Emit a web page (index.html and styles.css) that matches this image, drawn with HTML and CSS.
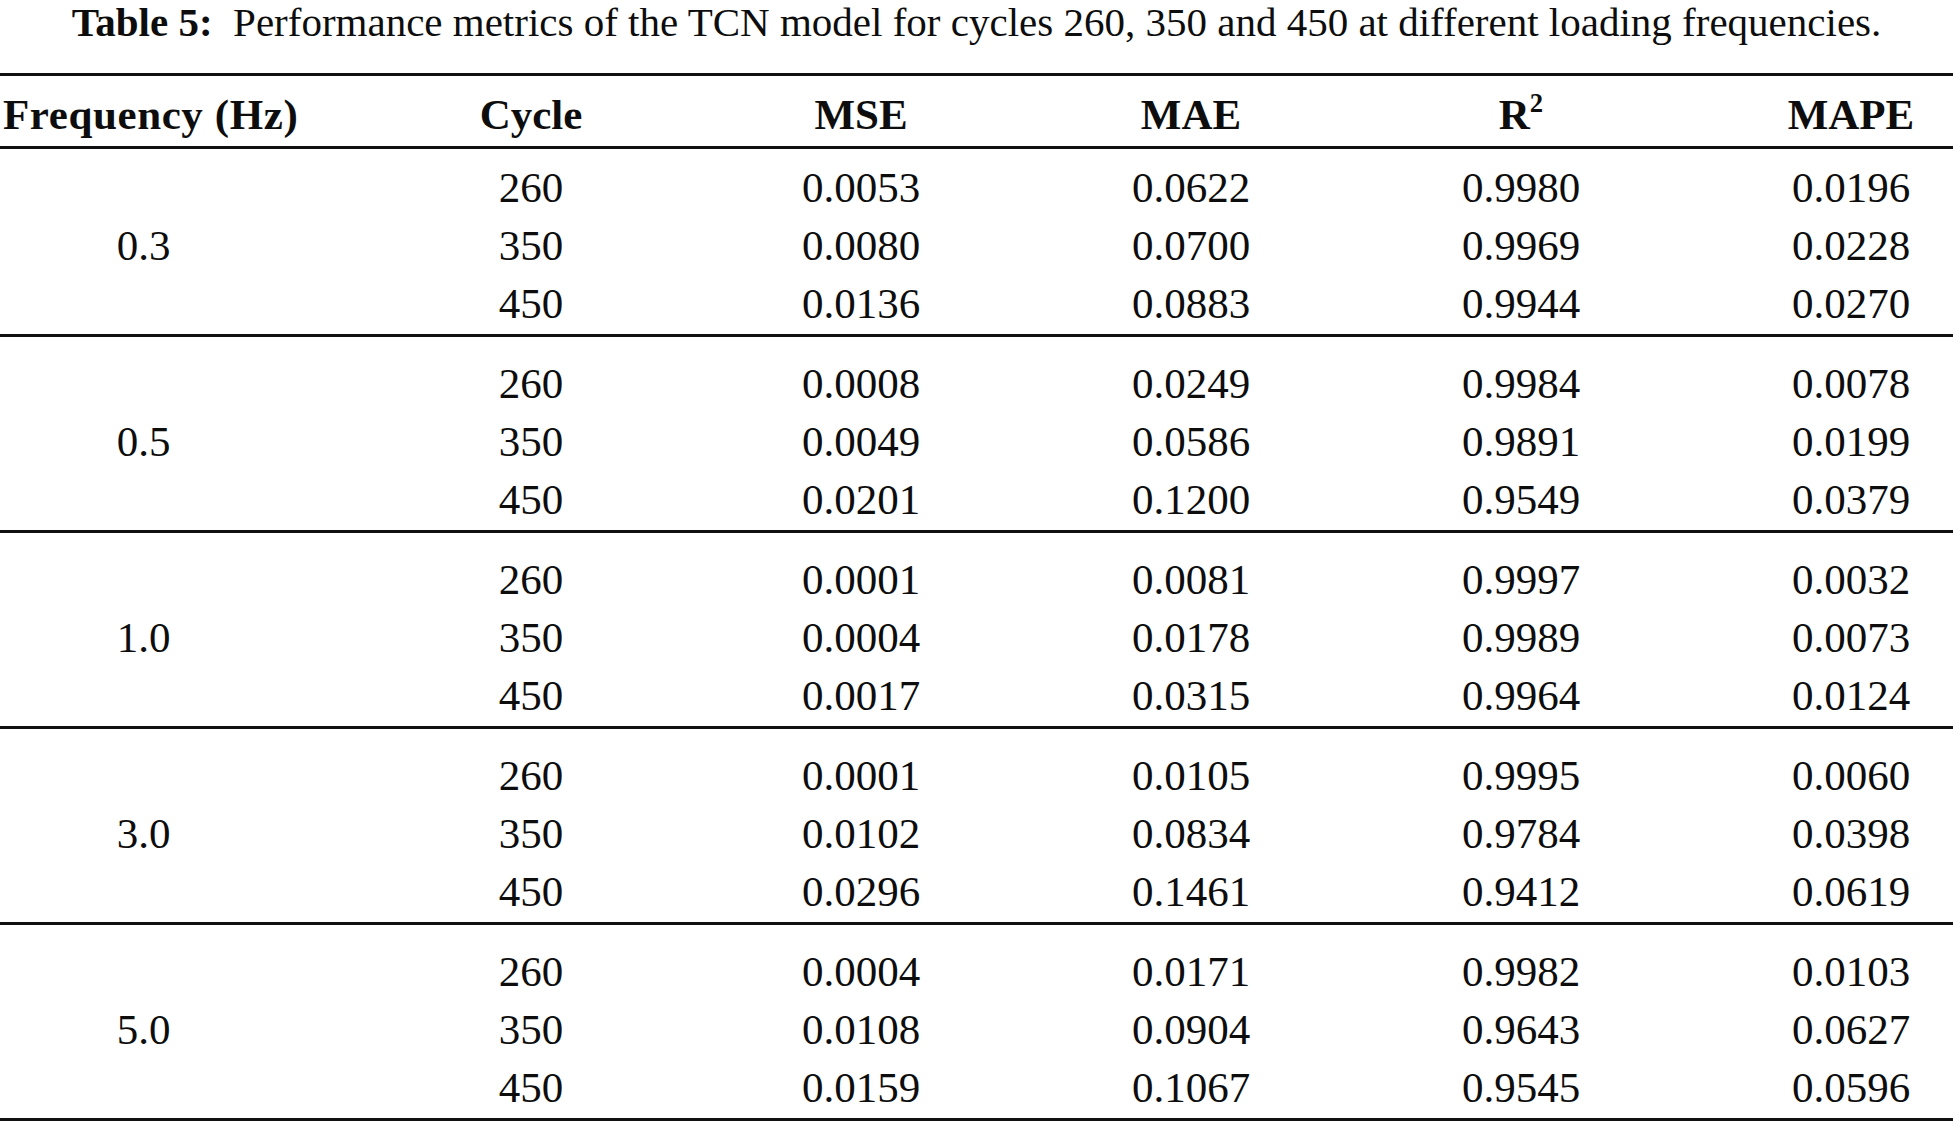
FILE: index.html
```html
<!DOCTYPE html>
<html lang="en">
<head>
<meta charset="utf-8">
<title>Table 5</title>
<link rel="stylesheet" href="styles.css">
</head>
<body>
<div class="page">
  <p class="caption"><b>Table 5:</b>&ensp;Performance metrics of the TCN model for cycles 260, 350 and 450 at different loading frequencies.</p>
  <div class="table">
    <div class="row head">
      <div class="cell first">Frequency (Hz)</div>
      <div class="cell">Cycle</div>
      <div class="cell">MSE</div>
      <div class="cell">MAE</div>
      <div class="cell">R<sup>2</sup></div>
      <div class="cell">MAPE</div>
    </div>

    <div class="row group top">
      <div class="cell freq">0.3</div>
      <div class="cell">260</div><div class="cell">0.0053</div><div class="cell">0.0622</div><div class="cell">0.9980</div><div class="cell">0.0196</div>
      <div class="cell">350</div><div class="cell">0.0080</div><div class="cell">0.0700</div><div class="cell">0.9969</div><div class="cell">0.0228</div>
      <div class="cell">450</div><div class="cell">0.0136</div><div class="cell">0.0883</div><div class="cell">0.9944</div><div class="cell">0.0270</div>
    </div>

    <div class="row group">
      <div class="cell freq">0.5</div>
      <div class="cell">260</div><div class="cell">0.0008</div><div class="cell">0.0249</div><div class="cell">0.9984</div><div class="cell">0.0078</div>
      <div class="cell">350</div><div class="cell">0.0049</div><div class="cell">0.0586</div><div class="cell">0.9891</div><div class="cell">0.0199</div>
      <div class="cell">450</div><div class="cell">0.0201</div><div class="cell">0.1200</div><div class="cell">0.9549</div><div class="cell">0.0379</div>
    </div>

    <div class="row group">
      <div class="cell freq">1.0</div>
      <div class="cell">260</div><div class="cell">0.0001</div><div class="cell">0.0081</div><div class="cell">0.9997</div><div class="cell">0.0032</div>
      <div class="cell">350</div><div class="cell">0.0004</div><div class="cell">0.0178</div><div class="cell">0.9989</div><div class="cell">0.0073</div>
      <div class="cell">450</div><div class="cell">0.0017</div><div class="cell">0.0315</div><div class="cell">0.9964</div><div class="cell">0.0124</div>
    </div>

    <div class="row group">
      <div class="cell freq">3.0</div>
      <div class="cell">260</div><div class="cell">0.0001</div><div class="cell">0.0105</div><div class="cell">0.9995</div><div class="cell">0.0060</div>
      <div class="cell">350</div><div class="cell">0.0102</div><div class="cell">0.0834</div><div class="cell">0.9784</div><div class="cell">0.0398</div>
      <div class="cell">450</div><div class="cell">0.0296</div><div class="cell">0.1461</div><div class="cell">0.9412</div><div class="cell">0.0619</div>
    </div>

    <div class="row group">
      <div class="cell freq">5.0</div>
      <div class="cell">260</div><div class="cell">0.0004</div><div class="cell">0.0171</div><div class="cell">0.9982</div><div class="cell">0.0103</div>
      <div class="cell">350</div><div class="cell">0.0108</div><div class="cell">0.0904</div><div class="cell">0.9643</div><div class="cell">0.0627</div>
      <div class="cell">450</div><div class="cell">0.0159</div><div class="cell">0.1067</div><div class="cell">0.9545</div><div class="cell">0.0596</div>
    </div>
  </div>
</div>
</body>
</html>
```

FILE: styles.css
```css
html, body {
  margin: 0;
  padding: 0;
  background: #ffffff;
}

.page {
  font-family: "Liberation Serif", "Times New Roman", serif;
  font-size: 43px;
  color: #0d0d0d;
  width: 1953px;
}

.caption {
  margin: 0 0 29px 0;
  height: 44px;
  line-height: 44px;
  font-size: 41px;
  text-align: center;
  white-space: nowrap;
}

.caption b {
  font-weight: bold;
}

.table {
  margin-left: 0;
  border-top: 3px solid #111;
}

.row {
  display: grid;
  grid-template-columns: 288px repeat(5, 174px);
  column-gap: 156px;
  grid-auto-rows: 58px;
  border-bottom: 3px solid #111;
}

.cell {
  line-height: 58px;
  text-align: center;
  white-space: nowrap;
}

.head {
  padding: 10px 0 2px 0;
  font-weight: bold;
}

.head .first {
  text-align: left;
  padding-left: 3px;
  letter-spacing: 0.6px;
}

.head sup {
  font-size: 0.62em;
  line-height: 0;
  vertical-align: 0.62em;
}

.group {
  padding: 18px 0 1px 0;
}

.group.top {
  padding-top: 10px;
}

.freq {
  grid-column: 1;
  grid-row: 1 / span 3;
  align-self: center;
  margin-left: -1px;
}
```
